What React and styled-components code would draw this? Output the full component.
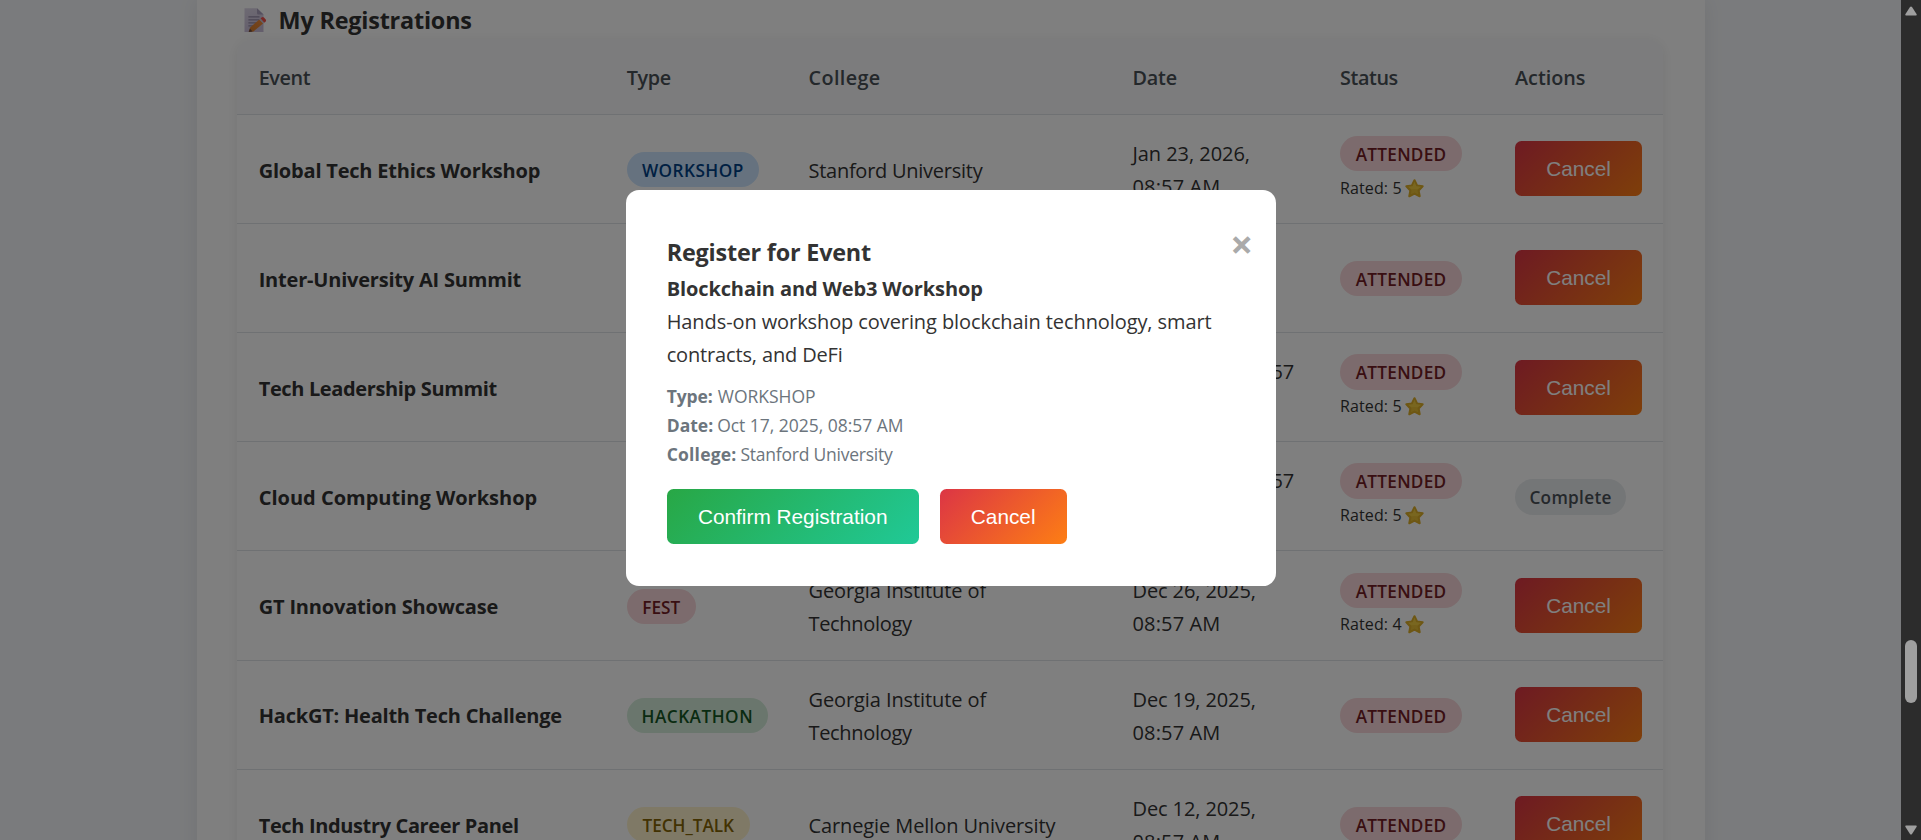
import React from "react";
import styled, { createGlobalStyle } from "styled-components";

const GlobalStyle = createGlobalStyle`
  * { box-sizing: border-box; }
  body {
    margin: 0;
    overflow: hidden;
    background: #f5f7fa;
    color: #333;
    font-family: "Segoe UI", "Open Sans", "Noto Sans", sans-serif;
    font-size: 20px;
    line-height: 33.28px;
  }
`;

const Screen = styled.div`
  display: flex;
  height: 840px;
  overflow: hidden;
`;

const Page = styled.main`
  flex: 1;
  display: flex;
  justify-content: center;
  align-items: flex-start;
  background: #f5f7fa;
`;

const Panel = styled.section`
  width: 1508px;
  height: 900px;
  padding: 0 41.6px 0 40.6px;
  background: #fff;
  box-shadow: 0 0 20px rgba(0, 0, 0, 0.08);
`;

const Title = styled.h3`
  display: flex;
  align-items: center;
  gap: 8.5px;
  height: 38.7px;
  margin: 0;
  padding-top: 1.6px;
  font-size: 23.4px;
  font-weight: 700;
  line-height: 38px;
  letter-spacing: -0.2px;
`;

const Table = styled.div`
  border-radius: 15.6px;
  background: #fff;
  overflow: hidden;
  box-shadow: 0 2.6px 13px rgba(0, 0, 0, 0.08);
`;

const Row = styled.div`
  display: grid;
  grid-template-columns: 368.9px 181.7px 324px 207.6px 175px 1fr;
  align-items: center;
  height: 109.2px;
  border-bottom: 1px solid #dee2e6;
`;

const HeaderRow = styled(Row)`
  height: 76px;
  background: #f8f9fa;
  color: #495057;
  font-size: 19.8px;
  font-weight: 600;
`;

const Cell = styled.div`
  padding: ${(p) => (p.$text ? "2.8px" : p.$badge ? "1.6px" : "0")} 0 0 20.8px;
  letter-spacing: ${(p) => p.$ls || 0}px;
  font-weight: ${(p) => (p.$bold ? 700 : "inherit")};
  white-space: nowrap;

  &:first-child {
    padding-left: 21.6px;
  }
`;

const StatusCell = styled(Cell)`
  display: flex;
  flex-direction: column;
  align-items: flex-start;
`;

const Line = styled.div`
  letter-spacing: ${(p) => p.$ls || 0}px;
`;

const badgeColors = {
  WORKSHOP: ["#cce5ff", "#004085"],
  FEST: ["#f8d7da", "#721c24"],
  ATTENDED: ["#f8d7da", "#721c24"],
  HACKATHON: ["#d4edda", "#155724"],
  TECH_TALK: ["#fff3cd", "#856404"],
  Complete: ["#e9ecef", "#495057"],
};
const badgeMetrics = {
  WORKSHOP: [132, 0.45],
  FEST: [69, 0],
  ATTENDED: [122, 0.25],
  HACKATHON: [141, 0.5],
  TECH_TALK: [123, -0.03],
  Complete: [111, 0.3],
};

const BadgePill = styled.span`
  display: flex;
  justify-content: center;
  width: ${(p) => badgeMetrics[p.$kind][0]}px;
  height: 35.3px;
  padding-top: 1px;
  border-radius: 18px;
  background: ${(p) => badgeColors[p.$kind][0]};
  color: ${(p) => badgeColors[p.$kind][1]};
  font-size: 17.2px;
  font-weight: 600;
  line-height: 35.3px;
  letter-spacing: ${(p) => badgeMetrics[p.$kind][1]}px;
`;

const Rating = styled.div`
  display: flex;
  align-items: center;
  gap: 3px;
  height: 32px;
  padding-top: 2px;
  font-size: 16px;
  letter-spacing: 0.1px;
`;

const Button = styled.button`
  display: block;
  width: ${(p) => p.$width || 127}px;
  height: 55px;
  padding: 1px 0 0;
  border: 0;
  border-radius: 6.5px;
  background: ${(p) =>
    p.$confirm
      ? "linear-gradient(135deg, #28a745, #20c997)"
      : "linear-gradient(135deg, #dc3545, #fd7e14)"};
  color: #fff;
  font: 20.8px "Liberation Sans", Arial, sans-serif;
`;

const Overlay = styled.div`
  position: fixed;
  inset: 0 20px 0 0;
  background: rgba(0, 0, 0, 0.5);
  display: flex;
  justify-content: center;
  align-items: flex-start;
  padding-top: 190px;
`;

const Modal = styled.div`
  position: relative;
  width: 650px;
  height: 396px;
  padding: 43px 41.2px 0;
  border-radius: 13px;
  background: #fff;
`;

const Close = styled.span`
  position: absolute;
  top: 35.5px;
  right: 22.5px;
  color: #aaa;
  font-size: 40px;
  font-weight: 700;
  line-height: 36px;
`;

const ModalTitle = styled.h3`
  margin: 0;
  font-size: 23.4px;
  line-height: 38.9px;
  letter-spacing: -0.2px;
`;

const EventName = styled.h4`
  margin: 0;
  font-size: 20px;
  letter-spacing: -0.12px;
`;

const Description = styled.p`
  margin: 0 0 10px;
`;

const Detail = styled.div`
  display: flex;
  gap: ${(p) => p.$gap || 4}px;
  color: #6c757d;
  font-size: 17.5px;
  line-height: 29.12px;
  letter-spacing: ${(p) => p.$ls || 0}px;
`;

const Label = styled.strong`
  letter-spacing: ${(p) => p.$ls || 0}px;
`;

const Actions = styled.div`
  display: flex;
  gap: 21px;
  margin-top: 20px;
`;

const Scrollbar = styled.div`
  display: flex;
  flex-direction: column;
  align-items: center;
  width: 20px;
  padding: 6px 0 5px;
  background: #2c2c2c;
`;

const Thumb = styled.div`
  width: 12px;
  height: 63px;
  margin: 624px 0 auto;
  border-radius: 6px;
  background: #9f9f9f;
`;

const MemoIcon = () => (
  <svg width="33" height="26" viewBox="0 0 33 26">
    <defs>
      <linearGradient id="pencil" x1="0" y1="1" x2="1" y2="0">
        <stop offset="0" stopColor="#d67d2c" />
        <stop offset="1" stopColor="#f28c3c" />
      </linearGradient>
      <linearGradient id="sheet" x1="0" y1="0" x2="0.3" y2="1">
        <stop offset="0" stopColor="#dcd5e6" />
        <stop offset="1" stopColor="#c9bdd8" />
      </linearGradient>
    </defs>
    <path d="M7.5 1.3H20L26.5 7.5V25H7.5Z" fill="url(#sheet)" />
    <path d="M20 1.3L26.5 7.5H21.3Q20 7.5 20 6Z" fill="#aaa0bd" />
    <path d="M11.4 9.8H22.5M11.4 12.8H22.5M11.4 15.8H19.5M11.4 18.8H16.5" stroke="#9389a5" strokeWidth="1.2" />
    <path d="M22.3 12.4L26.1 16.6L16.5 24.4L11.7 25L13.2 20.4Z" fill="url(#pencil)" />
    <path d="M12.9 21.5L15.5 24.5L11.7 25Z" fill="#6e4c40" />
    <path d="M23.5 11.4L24.7 10.4Q26 9.5 27.2 10.8L28.7 12.5Q29.7 13.8 28.5 14.8L27.2 15.8Z" fill="#f2504a" />
    <path d="M22.3 12.4L23.5 11.4L27.2 15.8L26.1 16.6Z" fill="#c8c3cf" />
  </svg>
);

const StarIcon = () => (
  <svg width="19" height="19" viewBox="0 0 18 18">
    <path
      d="M9 1.2L11.4 6.1L16.7 6.9L12.9 10.8L13.9 16.3L9 13.8L4.1 16.3L5.1 10.8L1.3 6.9L6.6 6.1Z"
      fill="#e8bf35"
      stroke="#dcae28"
      strokeWidth="2"
      strokeLinejoin="round"
    />
    <path d="M9 2.5L10.8 6.8L15.5 7.4L11.8 9.6L9 9.4L6 9.6L3 7.4L7.2 6.8Z" fill="#f2cc40" />
  </svg>
);

const Arrow = ({ down }) => (
  <svg width="12" height="10" viewBox="0 0 12 10">
    <path
      d={down ? "M1 0.5H11Q12.2 0.8 11.5 2L7 9Q6 10 5 9L0.5 2Q-0.2 0.8 1 0.5Z" : "M1 9.5H11Q12.2 9.2 11.5 8L7 1Q6 0 5 1L0.5 8Q-0.2 9.2 1 9.5Z"}
      fill="#9f9f9f"
    />
  </svg>
);

const headers = [
  ["Event", -0.4], ["Type", -0.35], ["College", 0.4], ["Date", -0.2], ["Status", -0.42], ["Actions", -0.04],
];

const GEORGIA = [["Georgia Institute of", -0.09], ["Technology", -0.31]];
const STANFORD = [["Stanford University", -0.26]];
const CARNEGIE = [["Carnegie Mellon University", -0.1]];
const AM = ["08:57 AM", 0.15];

const rows = [
  { name: "Global Tech Ethics Workshop", ls: -0.2, type: "WORKSHOP", college: STANFORD, date: [["Jan 23, 2026,", -0.05], AM], rated: 5 },
  { name: "Inter-University AI Summit", ls: -0.2, type: "FEST", college: STANFORD, date: [["Jan 16, 2026,", -0.05], AM] },
  { name: "Tech Leadership Summit", ls: -0.36, type: "FEST", college: CARNEGIE, date: [["Jan 9, 2026, 08:57", -0.06], ["AM", 0]], rated: 5 },
  { name: "Cloud Computing Workshop", ls: 0, type: "WORKSHOP", college: CARNEGIE, date: [["Jan 2, 2026, 08:57", -0.06], ["AM", 0]], rated: 5, complete: true },
  { name: "GT Innovation Showcase", ls: -0.18, type: "FEST", college: GEORGIA, date: [["Dec 26, 2025,", -0.1], AM], rated: 4 },
  { name: "HackGT: Health Tech Challenge", ls: -0.22, type: "HACKATHON", college: GEORGIA, date: [["Dec 19, 2025,", -0.1], AM] },
  { name: "Tech Industry Career Panel", ls: -0.36, type: "TECH_TALK", college: CARNEGIE, date: [["Dec 12, 2025,", -0.1], AM] },
];

const Badge = ({ kind }) => <BadgePill $kind={kind}>{kind}</BadgePill>;

const Lines = ({ lines }) => (
  <Cell $text>
    {lines.map(([text, ls]) => <Line key={text} $ls={ls}>{text}</Line>)}
  </Cell>
);

const Registration = ({ row }) => (
  <Row>
    <Cell $text $bold $ls={row.ls}>{row.name}</Cell>
    <Cell $badge><Badge kind={row.type} /></Cell>
    <Lines lines={row.college} />
    <Lines lines={row.date} />
    <StatusCell $badge>
      <Badge kind="ATTENDED" />
      {row.rated && <Rating>Rated: {row.rated}<StarIcon /></Rating>}
    </StatusCell>
    {row.complete ? (
      <Cell $badge><Badge kind="Complete" /></Cell>
    ) : (
      <Cell><Button>Cancel</Button></Cell>
    )}
  </Row>
);

export default function App() {
  return (
    <>
      <GlobalStyle />
      <Screen>
        <Page>
          <Panel>
            <Title><MemoIcon />My Registrations</Title>
            <Table>
              <HeaderRow>
                {headers.map(([text, ls]) => <Cell key={text} $text $ls={ls}>{text}</Cell>)}
              </HeaderRow>
              {rows.map((row) => <Registration key={row.name} row={row} />)}
            </Table>
          </Panel>
        </Page>
        <Scrollbar>
          <Arrow />
          <Thumb />
          <Arrow down />
        </Scrollbar>
      </Screen>
      <Overlay>
        <Modal>
          <Close>×</Close>
          <ModalTitle>Register for Event</ModalTitle>
          <EventName>Blockchain and Web3 Workshop</EventName>
          <Description>
            <Line $ls={-0.09}>Hands-on workshop covering blockchain technology, smart</Line>
            <Line $ls={-0.15}>contracts, and DeFi</Line>
          </Description>
          <Detail $gap={5.2}><Label $ls={-0.13}>Type:</Label>WORKSHOP</Detail>
          <Detail $ls={-0.03}><Label>Date:</Label>Oct 17, 2025, 08:57 AM</Detail>
          <Detail $ls={-0.24}><Label $ls={0.2}>College:</Label>Stanford University</Detail>
          <Actions>
            <Button $confirm $width={252}>Confirm Registration</Button>
            <Button>Cancel</Button>
          </Actions>
        </Modal>
      </Overlay>
    </>
  );
}
